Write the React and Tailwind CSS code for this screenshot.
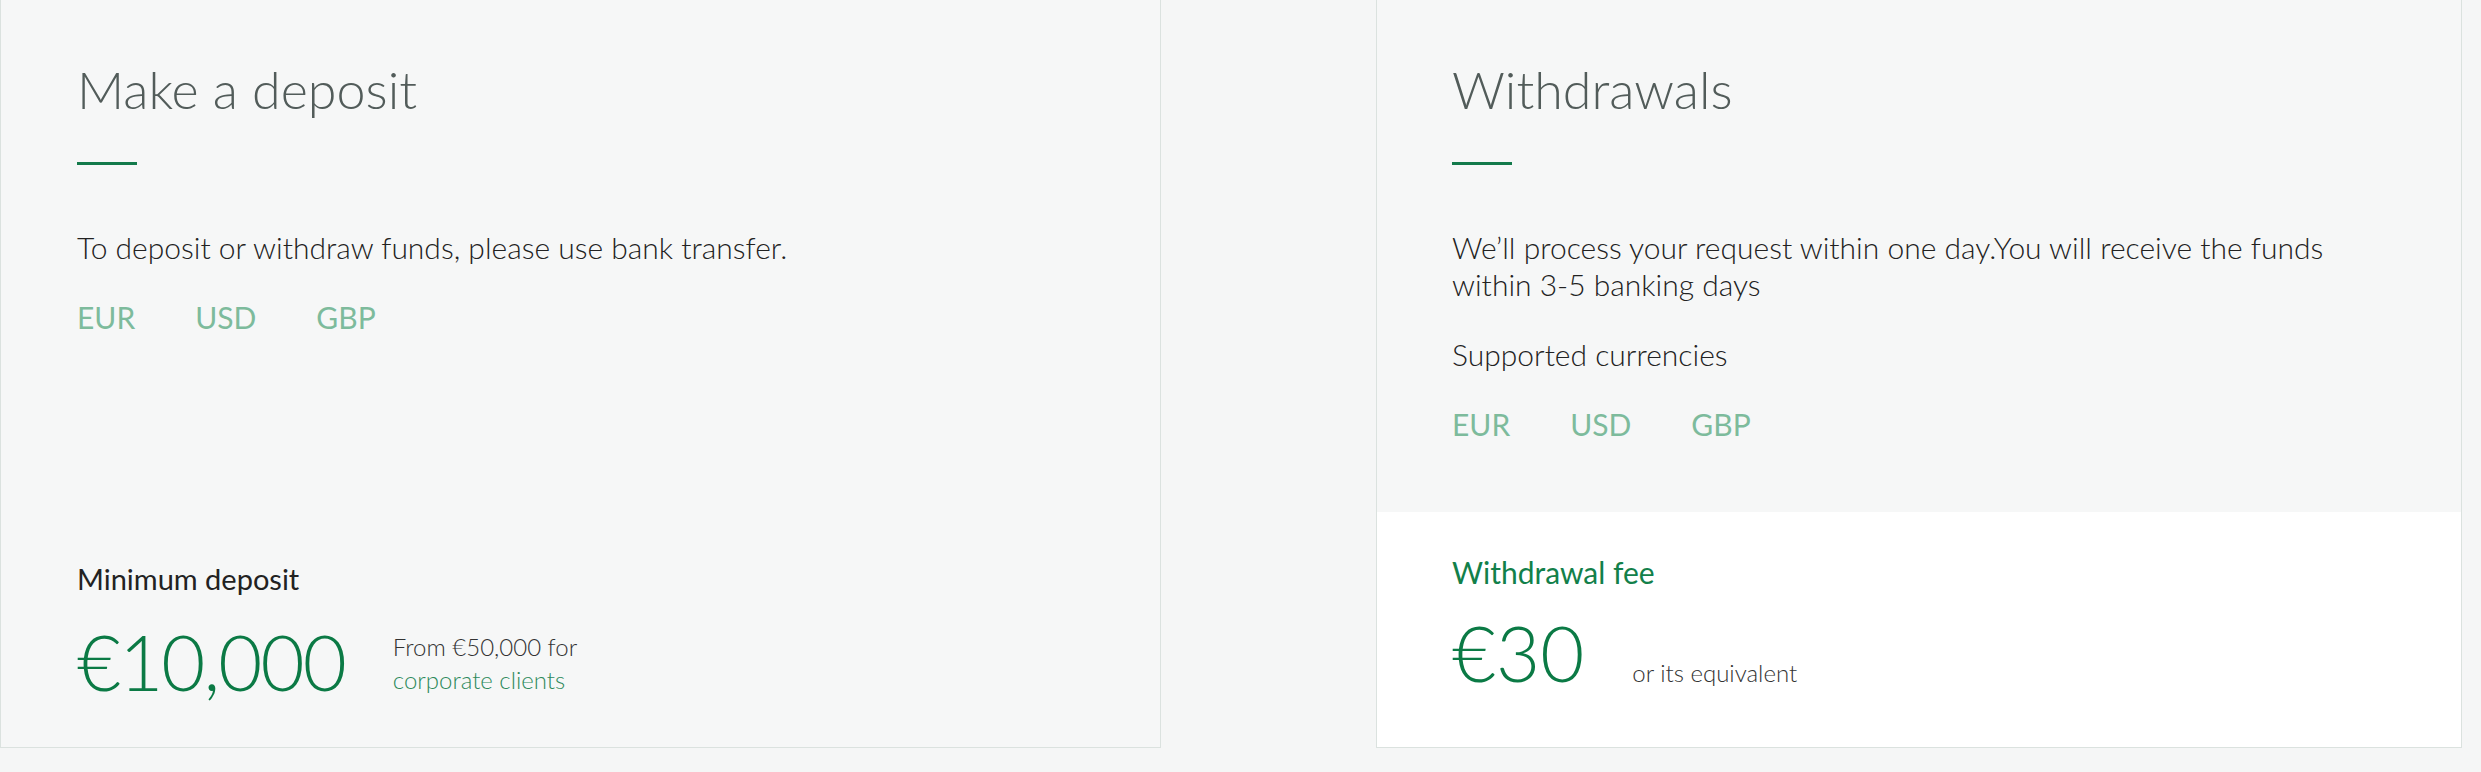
import React from 'react';

const currencies = ['EUR', 'USD', 'GBP'];

const CurrencyList = () => (
  <div className="mt-[33px] flex gap-[60px] text-[30px] leading-[37px] text-[#7dbb9c]">
    {currencies.map((c) => (
      <span key={c}>{c}</span>
    ))}
  </div>
);

const Heading = ({ children }) => (
  <>
    <h2 className="text-[52px] font-light leading-none text-[#525c5a]">{children}</h2>
    <div className="mt-[47px] h-[3px] w-[60px] bg-[#137a4b]" />
  </>
);

const App = () => {
  return (
    <div className="flex h-[772px] w-full items-start bg-[#f5f6f6] font-['Lato','Open_Sans',sans-serif]">
      {/* Deposit card */}
      <div className="flex h-[748px] w-[1161px] shrink-0 flex-col justify-between border border-t-0 border-[#dbe2df] bg-[#f6f7f7] pl-[76px] pr-[76px] pt-[63px]">
        <div>
          <Heading>Make a deposit</Heading>
          <p className="mt-[64px] text-[30px] font-light leading-[37px] text-[#222]">
            To deposit or withdraw funds, please use bank transfer.
          </p>
          <CurrencyList />
        </div>

        <div className="pb-[47px]">
          <p className="text-[29px] leading-[34px] text-[#222]">Minimum deposit</p>
          <div className="mt-[28px] flex items-end gap-12">
            <span className="text-[76px] font-light leading-none tracking-tight text-[#0b7a45]">€10,000</span>
            <div className="mb-[4px] text-[24px] font-light leading-[33px] text-[#333]">
              <p>From €50,000 for</p>
              <a href="#" className="text-[#2e8a5c]">
                corporate clients
              </a>
            </div>
          </div>
        </div>
      </div>

      {/* Withdrawals card */}
      <div className="ml-[215px] flex h-[748px] w-[1086px] shrink-0 flex-col border border-t-0 border-[#dbe2df] bg-[#f6f7f7]">
        <div className="flex-1 pl-[75px] pr-[76px] pt-[63px]">
          <Heading>Withdrawals</Heading>
          <p className="mt-[64px] text-[30px] font-light leading-[37px] text-[#222]">
            We’ll process your request within one day.You will receive the funds within 3-5 banking days
          </p>
          <p className="mt-[33px] text-[30px] font-light leading-[37px] text-[#222]">Supported currencies</p>
          <CurrencyList />
        </div>

        <div className="h-[235px] bg-white pl-[75px] pt-[42px]">
          <p className="text-[30px] leading-[36px] text-[#12804a]">Withdrawal fee</p>
          <div className="mt-[25px] flex items-end gap-12">
            <span className="text-[76px] font-light leading-none text-[#0b7a45]">€30</span>
            <span className="mb-[2px] text-[24px] font-light leading-[33px] text-[#333]">or its equivalent</span>
          </div>
        </div>
      </div>
    </div>
  );
};

export default App;
